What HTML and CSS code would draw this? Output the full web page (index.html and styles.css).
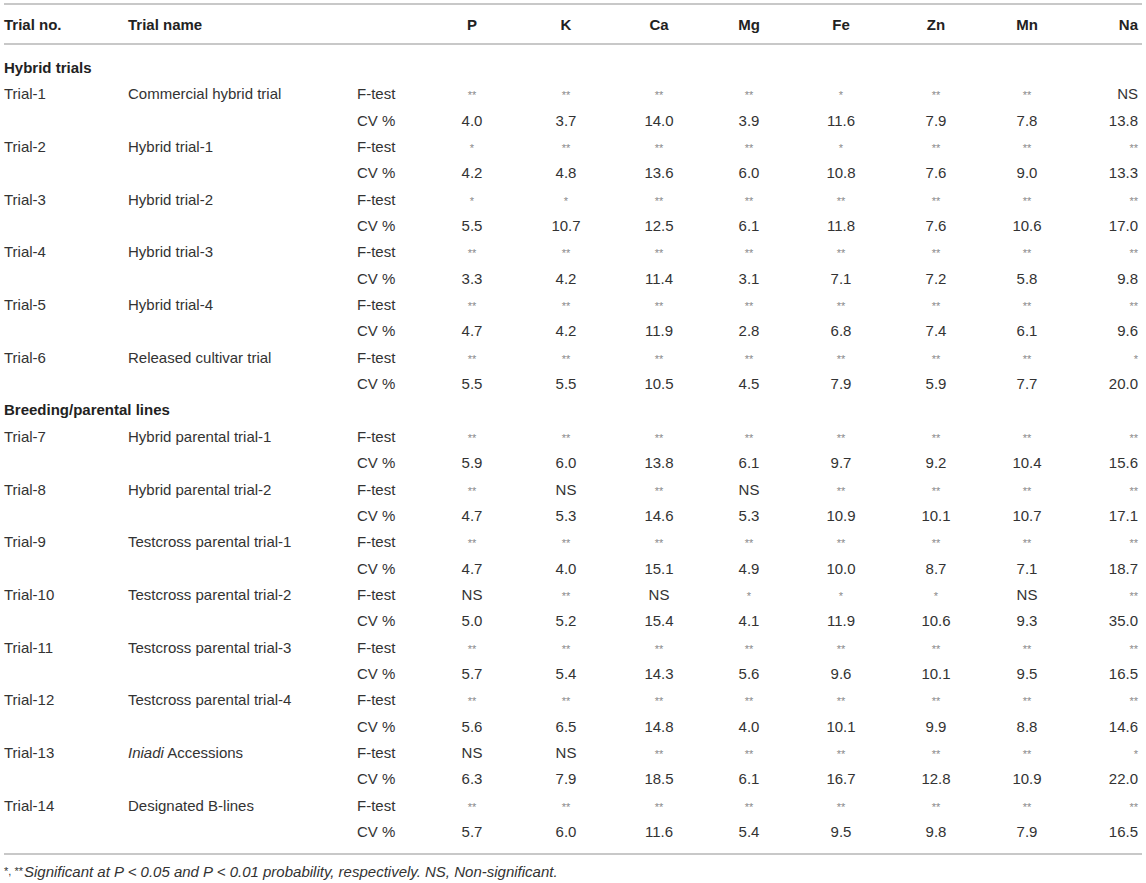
FILE: index.html
```html
<!DOCTYPE html>
<html>
<head>
<meta charset="utf-8">
<link rel="stylesheet" href="styles.css">
</head>
<body>
<table class="tbl">
<colgroup>
<col class="c-no"><col class="c-name"><col class="c-stat">
<col class="c-p"><col class="c-k"><col class="c-ca"><col class="c-mg"><col class="c-fe"><col class="c-zn"><col class="c-mn"><col class="c-na">
</colgroup>
<thead>
<tr><th class="l">Trial no.</th><th class="l">Trial name</th><th></th><th>P</th><th>K</th><th>Ca</th><th>Mg</th><th>Fe</th><th>Zn</th><th>Mn</th><th class="r">Na</th></tr>
</thead>
<tbody>
<tr class="sec first"><td colspan="11">Hybrid trials</td></tr>
<tr><td>Trial-1</td><td>Commercial hybrid trial</td><td>F-test</td><td><s>**</s></td><td><s>**</s></td><td><s>**</s></td><td><s>**</s></td><td><s>*</s></td><td><s>**</s></td><td><s>**</s></td><td class="r">NS</td></tr>
<tr><td></td><td></td><td>CV %</td><td>4.0</td><td>3.7</td><td>14.0</td><td>3.9</td><td>11.6</td><td>7.9</td><td>7.8</td><td class="r">13.8</td></tr>
<tr><td>Trial-2</td><td>Hybrid trial-1</td><td>F-test</td><td><s>*</s></td><td><s>**</s></td><td><s>**</s></td><td><s>**</s></td><td><s>*</s></td><td><s>**</s></td><td><s>**</s></td><td class="r"><s>**</s></td></tr>
<tr><td></td><td></td><td>CV %</td><td>4.2</td><td>4.8</td><td>13.6</td><td>6.0</td><td>10.8</td><td>7.6</td><td>9.0</td><td class="r">13.3</td></tr>
<tr><td>Trial-3</td><td>Hybrid trial-2</td><td>F-test</td><td><s>*</s></td><td><s>*</s></td><td><s>**</s></td><td><s>**</s></td><td><s>**</s></td><td><s>**</s></td><td><s>**</s></td><td class="r"><s>**</s></td></tr>
<tr><td></td><td></td><td>CV %</td><td>5.5</td><td>10.7</td><td>12.5</td><td>6.1</td><td>11.8</td><td>7.6</td><td>10.6</td><td class="r">17.0</td></tr>
<tr><td>Trial-4</td><td>Hybrid trial-3</td><td>F-test</td><td><s>**</s></td><td><s>**</s></td><td><s>**</s></td><td><s>**</s></td><td><s>**</s></td><td><s>**</s></td><td><s>**</s></td><td class="r"><s>**</s></td></tr>
<tr><td></td><td></td><td>CV %</td><td>3.3</td><td>4.2</td><td>11.4</td><td>3.1</td><td>7.1</td><td>7.2</td><td>5.8</td><td class="r">9.8</td></tr>
<tr><td>Trial-5</td><td>Hybrid trial-4</td><td>F-test</td><td><s>**</s></td><td><s>**</s></td><td><s>**</s></td><td><s>**</s></td><td><s>**</s></td><td><s>**</s></td><td><s>**</s></td><td class="r"><s>**</s></td></tr>
<tr><td></td><td></td><td>CV %</td><td>4.7</td><td>4.2</td><td>11.9</td><td>2.8</td><td>6.8</td><td>7.4</td><td>6.1</td><td class="r">9.6</td></tr>
<tr><td>Trial-6</td><td>Released cultivar trial</td><td>F-test</td><td><s>**</s></td><td><s>**</s></td><td><s>**</s></td><td><s>**</s></td><td><s>**</s></td><td><s>**</s></td><td><s>**</s></td><td class="r"><s>*</s></td></tr>
<tr><td></td><td></td><td>CV %</td><td>5.5</td><td>5.5</td><td>10.5</td><td>4.5</td><td>7.9</td><td>5.9</td><td>7.7</td><td class="r">20.0</td></tr>
<tr class="sec"><td colspan="11">Breeding/parental lines</td></tr>
<tr><td>Trial-7</td><td>Hybrid parental trial-1</td><td>F-test</td><td><s>**</s></td><td><s>**</s></td><td><s>**</s></td><td><s>**</s></td><td><s>**</s></td><td><s>**</s></td><td><s>**</s></td><td class="r"><s>**</s></td></tr>
<tr><td></td><td></td><td>CV %</td><td>5.9</td><td>6.0</td><td>13.8</td><td>6.1</td><td>9.7</td><td>9.2</td><td>10.4</td><td class="r">15.6</td></tr>
<tr><td>Trial-8</td><td>Hybrid parental trial-2</td><td>F-test</td><td><s>**</s></td><td>NS</td><td><s>**</s></td><td>NS</td><td><s>**</s></td><td><s>**</s></td><td><s>**</s></td><td class="r"><s>**</s></td></tr>
<tr><td></td><td></td><td>CV %</td><td>4.7</td><td>5.3</td><td>14.6</td><td>5.3</td><td>10.9</td><td>10.1</td><td>10.7</td><td class="r">17.1</td></tr>
<tr><td>Trial-9</td><td>Testcross parental trial-1</td><td>F-test</td><td><s>**</s></td><td><s>**</s></td><td><s>**</s></td><td><s>**</s></td><td><s>**</s></td><td><s>**</s></td><td><s>**</s></td><td class="r"><s>**</s></td></tr>
<tr><td></td><td></td><td>CV %</td><td>4.7</td><td>4.0</td><td>15.1</td><td>4.9</td><td>10.0</td><td>8.7</td><td>7.1</td><td class="r">18.7</td></tr>
<tr><td>Trial-10</td><td>Testcross parental trial-2</td><td>F-test</td><td>NS</td><td><s>**</s></td><td>NS</td><td><s>*</s></td><td><s>*</s></td><td><s>*</s></td><td>NS</td><td class="r"><s>**</s></td></tr>
<tr><td></td><td></td><td>CV %</td><td>5.0</td><td>5.2</td><td>15.4</td><td>4.1</td><td>11.9</td><td>10.6</td><td>9.3</td><td class="r">35.0</td></tr>
<tr><td>Trial-11</td><td>Testcross parental trial-3</td><td>F-test</td><td><s>**</s></td><td><s>**</s></td><td><s>**</s></td><td><s>**</s></td><td><s>**</s></td><td><s>**</s></td><td><s>**</s></td><td class="r"><s>**</s></td></tr>
<tr><td></td><td></td><td>CV %</td><td>5.7</td><td>5.4</td><td>14.3</td><td>5.6</td><td>9.6</td><td>10.1</td><td>9.5</td><td class="r">16.5</td></tr>
<tr><td>Trial-12</td><td>Testcross parental trial-4</td><td>F-test</td><td><s>**</s></td><td><s>**</s></td><td><s>**</s></td><td><s>**</s></td><td><s>**</s></td><td><s>**</s></td><td><s>**</s></td><td class="r"><s>**</s></td></tr>
<tr><td></td><td></td><td>CV %</td><td>5.6</td><td>6.5</td><td>14.8</td><td>4.0</td><td>10.1</td><td>9.9</td><td>8.8</td><td class="r">14.6</td></tr>
<tr><td>Trial-13</td><td><i>Iniadi</i> Accessions</td><td>F-test</td><td>NS</td><td>NS</td><td><s>**</s></td><td><s>**</s></td><td><s>**</s></td><td><s>**</s></td><td><s>**</s></td><td class="r"><s>*</s></td></tr>
<tr><td></td><td></td><td>CV %</td><td>6.3</td><td>7.9</td><td>18.5</td><td>6.1</td><td>16.7</td><td>12.8</td><td>10.9</td><td class="r">22.0</td></tr>
<tr><td>Trial-14</td><td>Designated B-lines</td><td>F-test</td><td><s>**</s></td><td><s>**</s></td><td><s>**</s></td><td><s>**</s></td><td><s>**</s></td><td><s>**</s></td><td><s>**</s></td><td class="r"><s>**</s></td></tr>
<tr class="last"><td></td><td></td><td>CV %</td><td>5.7</td><td>6.0</td><td>11.6</td><td>5.4</td><td>9.5</td><td>9.8</td><td>7.9</td><td class="r">16.5</td></tr>
</tbody>
</table>
<p class="foot"><span class="fstar">*, **</span><i>Significant at P &lt; 0.05 and P &lt; 0.01 probability, respectively. NS, Non-significant.</i></p>
</body>
</html>
```

FILE: styles.css
```css
html, body {
  margin: 0;
  background: #fff;
}
body {
  padding: 3px 4px 0 4px;
  font-family: "Liberation Sans", Arial, sans-serif;
  font-size: 15px;
  color: #333;
}
.tbl {
  width: 1138px;
  table-layout: fixed;
  border-collapse: separate;
  border-spacing: 0;
}
.c-no { width: 124px; }
.c-name { width: 229px; }
.c-stat { width: 69px; }
.c-p { width: 92px; }
.c-k { width: 96px; }
.c-ca { width: 90px; }
.c-mg { width: 90px; }
.c-fe { width: 94px; }
.c-zn { width: 96px; }
.c-mn { width: 86px; }
.c-na { width: 72px; }

.tbl th {
  height: 38px;
  padding: 0;
  font-weight: bold;
  color: #222;
  text-align: center;
  vertical-align: middle;
  border-top: 2px solid #c8c8c8;
  border-bottom: 2px solid #c8c8c8;
}
.tbl th.l { text-align: left; }
.tbl th.r, .tbl td.r { text-align: right; padding-right: 4px; }

.tbl td {
  padding: 0;
  height: 26.35px;
  line-height: 26.35px;
  white-space: nowrap;
  text-align: center;
  vertical-align: middle;
}
.tbl td:nth-child(1), .tbl td:nth-child(2), .tbl td:nth-child(3) { text-align: left; }
.tbl tr.sec td {
  text-align: left;
  font-weight: bold;
  color: #222;
}
.tbl tr.sec.first td { padding-top: 10px; }
.tbl tr.last td {
  padding-bottom: 8px;
  border-bottom: 2px solid #c8c8c8;
}
.tbl s {
  text-decoration: none;
  font-size: 11px;
  line-height: 1;
  color: #8a8a8a;
  vertical-align: baseline;
}
.foot {
  margin: 8px 0 0 0;
  line-height: 18px;
  font-size: 15px;
  color: #333;
}
.fstar {
  font-size: 11px;
  line-height: 1;
  vertical-align: 2px;
  margin-right: 1px;
}
```
